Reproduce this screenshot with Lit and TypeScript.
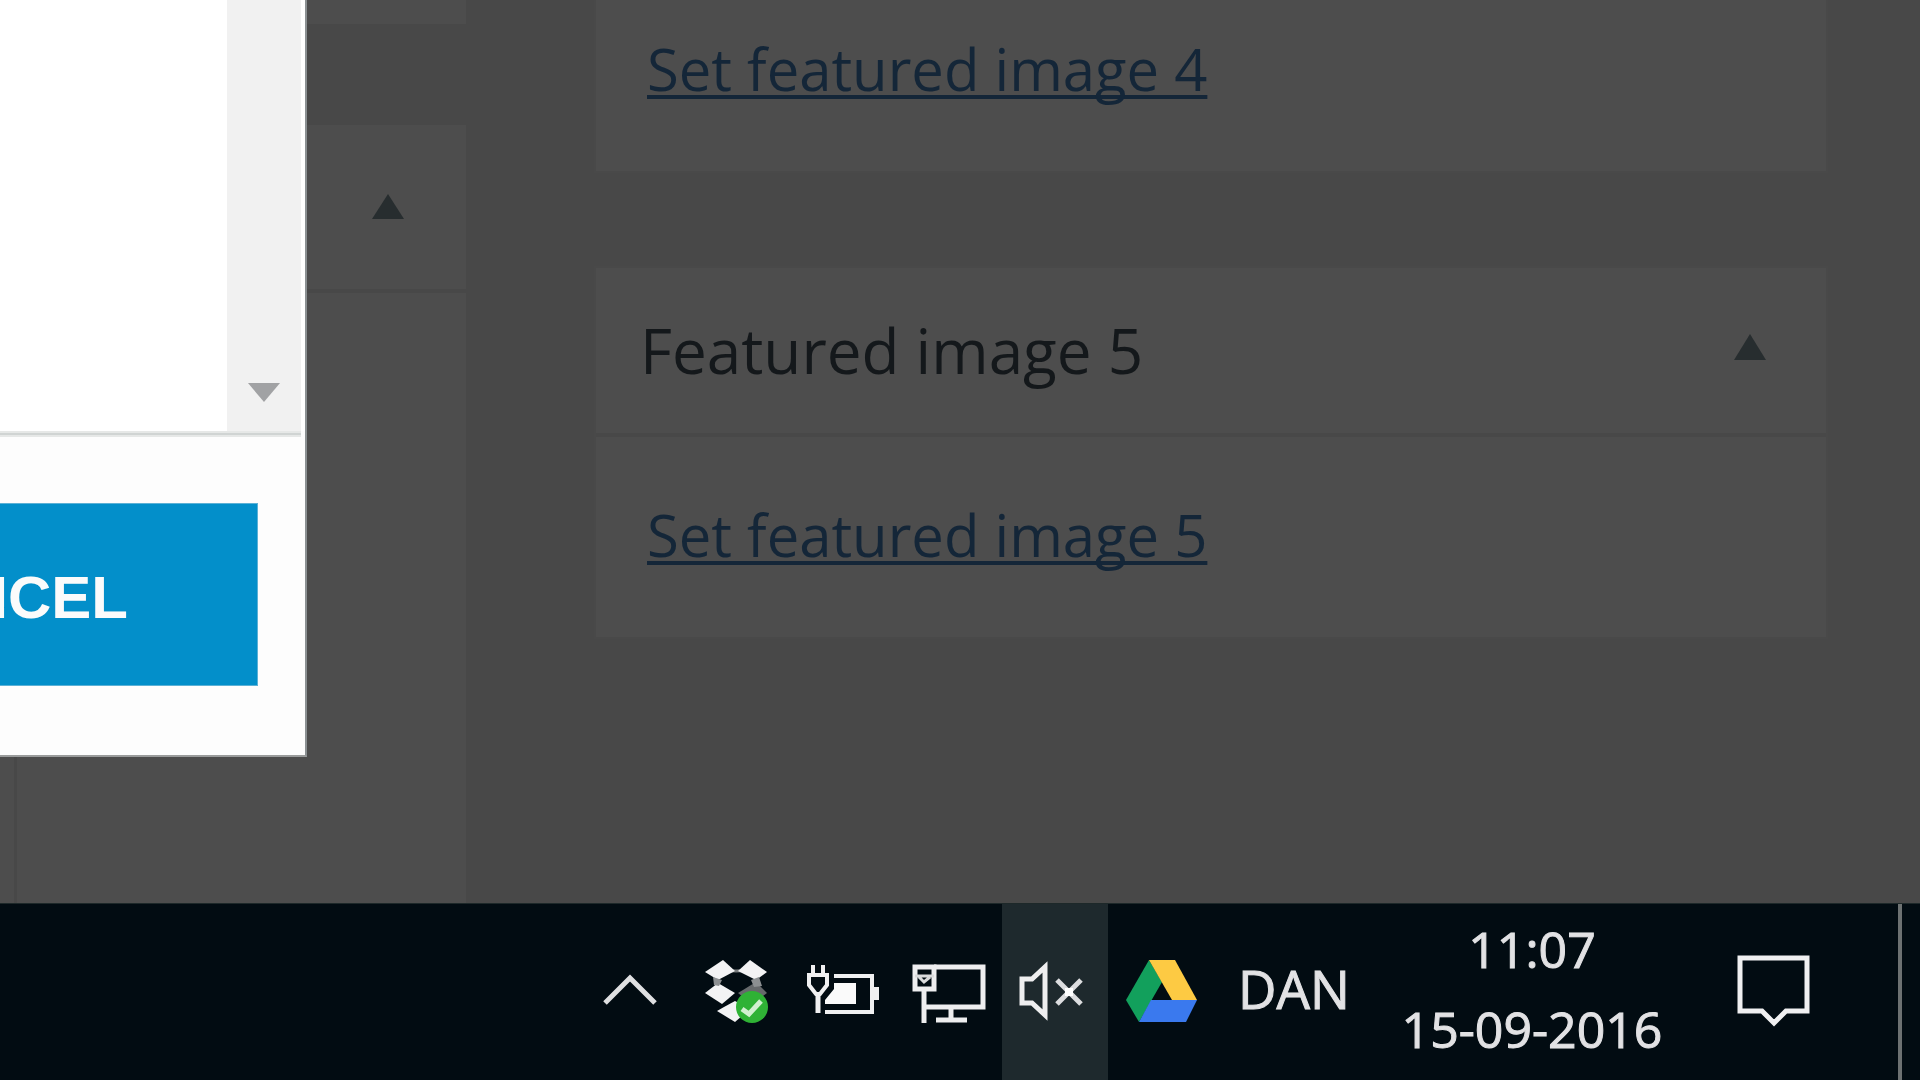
import { LitElement, html, css, svg } from "lit";
import { customElement, property } from "lit/decorators.js";

@customElement("meta-card")
export class MetaCard extends LitElement {
  @property() heading = "";
  @property() action = "";

  static styles = css`
    .card {
      background: #4d4d4d;
      border: 2px solid #494949;
      color: #14181b;
    }
    .card.cut {
      border-top: 0;
    }
    .head {
      display: flex;
      align-items: center;
      justify-content: space-between;
      padding: 46px 60px 47px 44px;
      border-bottom: 4px solid #484848;
    }
    h2 {
      margin: 0;
      font-size: 62px;
      line-height: 72px;
      font-weight: 400;
    }
    .toggle {
      display: flex;
      padding: 0;
      border: 0;
      background: none;
    }
    .body {
      padding: 66px 51px 70px;
      font-size: 58px;
      line-height: 64px;
    }
    .cut .body {
      padding-top: 37px;
    }
    a {
      color: #142638;
      text-decoration: underline;
      text-decoration-thickness: 4px;
      text-underline-offset: 4px;
      text-decoration-skip-ink: none;
    }
  `;

  render() {
    return html`
      <div class="card ${this.heading ? "" : "cut"}">
        ${this.heading
          ? html`<div class="head">
              <h2>${this.heading}</h2>
              <button class="toggle" aria-label="Toggle panel">
                <svg width="32" height="40" viewBox="0 0 32 40">
                  <path d="M16 4 32 30H0z" fill="#272d2f" />
                </svg>
              </button>
            </div>`
          : ""}
        <div class="body"><a href="#">${this.action}</a></div>
      </div>
    `;
  }
}

const trayIcons = [
  {
    label: "Show hidden icons",
    art: svg`<path d="M27 100 52 75 77 100" fill="none" stroke="#dfe0e1" stroke-width="5" />`,
  },
  {
    label: "Dropbox",
    art: svg`
      <path d="M36 67 52 68 70 67 M33 78 V80 M72 77V80" stroke="#777b7d" stroke-width="3" fill="none" />
      <g fill="#f3f3f4">
        <path d="M21 69 39 57 51 68 34 77z" />
        <path d="M66 57 83 69 72 77 54 68z" />
        <path d="M21 90 34 80 51 90 38 101z" />
        <path d="M33 108 40 104 51 98 66 106 51 119z" />
      </g>
      <path d="M54 90 72 79 83 90 68 101z" fill="#66696b" />
      <path d="M29 74 38 77 35 83 30 82z M67 77 75 74 78 83 70 84z" fill="#8c8f91" />
      <circle cx="68" cy="104" r="16" fill="#2fb235" />
      <path d="M58 106 65 111 77 98" fill="none" stroke="#d2f0d0" stroke-width="5" />`,
  },
  {
    label: "Battery charging",
    art: svg`
      <g fill="none" stroke="#f0f0f1" stroke-width="4">
        <path d="M23 62V72M33 62V72" />
        <path d="M19 72H37V82L30 91H26L19 82z" />
        <path d="M28 91V110" stroke-width="5" />
        <path d="M44 73H82V109H35" />
      </g>
      <path d="M44 80H66V101H35V97L44 86z" fill="#fafafa" />
      <path d="M83 84h6v13h-6z" fill="#f0f0f1" />`,
  },
  {
    label: "Network",
    art: svg`
      <g fill="none" stroke="#eeeeef" stroke-width="5">
        <path d="M38 64H87V104H28" />
        <path d="M19 64H38V86H19z" />
        <path d="M28 86V120M55 104V117M40 117H71" />
      </g>
      <path d="M19 73H38M23 74 28 79 34 74" fill="none" stroke="#d9dadb" stroke-width="3" />`,
  },
  {
    label: "Volume muted",
    art: svg`
      <g fill="none" stroke="#eeeeef" stroke-width="5">
        <path d="M20 76H30L43 64V112L30 100H20z" />
        <path d="M55 77 79 101M79 77 55 101" stroke="#dcdddf" />
      </g>
      <path d="M63 85h8v8h-8z" fill="#fff" />`,
  },
  {
    label: "Google Drive",
    art: svg`
      <path d="M41 57 54 79 31 119 18 97z" fill="#12a05c" />
      <path d="M41 57H67L89 97H64z" fill="#fdca43" />
      <path d="M43 97H89L78 119H31z" fill="#3a79ee" />`,
  },
];

@customElement("task-bar")
export class TaskBar extends LitElement {
  static styles = css`
    :host {
      display: flex;
      justify-content: flex-end;
      background: #020c12;
      border-top: 1px solid #1d2829;
      color: #e2e2e4;
    }
    button {
      display: flex;
      align-items: center;
      justify-content: center;
      padding: 0;
      border: 0;
      background: none;
      color: inherit;
      font: inherit;
      -webkit-text-stroke: 1px currentColor;
    }
    svg {
      display: block;
      margin-top: -1px;
    }
    .active {
      background: #1e292d;
    }
    .lang {
      width: 160px;
      padding-bottom: 8px;
      font-size: 53px;
    }
    .clock {
      width: 316px;
      flex-direction: column;
      padding-bottom: 7px;
      font-size: 50px;
      line-height: 80px;
    }
    .notes {
      margin-right: 41px;
    }
    .peek {
      width: 22px;
      border-left: 4px solid #6d7272;
    }
  `;

  render() {
    return html`
      ${trayIcons.map(
        (icon) => html`<button
          class=${icon.label === "Volume muted" ? "active" : ""}
          aria-label=${icon.label}
        >
          <svg width="106" height="177" viewBox="0 0 106 177">${icon.art}</svg>
        </button>`
      )}
      <button class="lang">DAN</button>
      <button class="clock"><span>11:07</span><span>15-09-2016</span></button>
      <button class="notes" aria-label="Notifications">
        <svg width="167" height="177" viewBox="0 0 167 177">
          <path
            d="M50 55H117V108H96L84 120 72 108H50z"
            fill="none"
            stroke="#f0f0f1"
            stroke-width="5"
          />
        </svg>
      </button>
      <button class="peek" aria-label="Show desktop"></button>
    `;
  }
}

@customElement("app-root")
export class AppRoot extends LitElement {
  static styles = css`
    :host {
      display: flex;
      flex-direction: column;
      min-height: 100vh;
      background: #484848;
      font-family: "Open Sans", "Noto Sans", sans-serif;
    }
    .workspace {
      position: relative;
      flex: 1;
      display: grid;
      grid-template-columns: 466px minmax(0, 1fr);
      column-gap: 128px;
      padding-right: 92px;
    }
    .main {
      display: flex;
      flex-direction: column;
      gap: 101px;
    }
    .panel-end {
      height: 24px;
      background: #4d4d4d;
    }
    .panel {
      flex: 1;
      display: flex;
      flex-direction: column;
      background: #4d4d4d;
    }
    .panel-head {
      display: flex;
      justify-content: flex-end;
      padding: 66px 62px 61px 0;
      border-bottom: 4px solid #484848;
    }
    .panel-body {
      flex: 1;
      margin-left: 14px;
      border-left: 3px solid #484848;
    }
    .side {
      display: flex;
      flex-direction: column;
      gap: 93px;
    }
    .toggle,
    .scroll {
      display: flex;
      padding: 0;
      border: 0;
      background: none;
    }
    .modal {
      position: absolute;
      top: 0;
      left: 0;
      width: 307px;
      overflow: hidden;
      background: #fdfdfd;
      border-right: 2px solid #8b9092;
      border-bottom: 2px solid #9a9c9c;
      box-sizing: border-box;
    }
    .content {
      display: flex;
      justify-content: flex-end;
      height: 431px;
      background: #fff;
      padding-right: 4px;
    }
    .track {
      display: flex;
      align-items: flex-end;
      justify-content: center;
      width: 74px;
      padding-bottom: 28px;
      box-sizing: border-box;
      background: #f1f1f1;
    }
    .rule {
      height: 2px;
      margin-right: 4px;
      border: 2px solid #e6e8e7;
      border-width: 2px 0;
      background: #d0d4d3;
    }
    .footer {
      display: flex;
      justify-content: flex-end;
      padding: 66px 47px 69px 0;
    }
    .cancel {
      flex: none;
      padding: 60px 129px 53px;
      border: 1px solid #5cb1d6;
      background: #038fca;
      color: #fbfbfb;
      font: bold 60px/68px "Liberation Sans", Arial, sans-serif;
    }
  `;

  render() {
    return html`
      <div class="workspace">
        <div class="main">
          <div class="panel-end"></div>
          <section class="panel">
            <div class="panel-head">
              <button class="toggle" aria-label="Toggle panel">
                <svg width="32" height="37" viewBox="0 0 32 37">
                  <path d="M16 3 32 28H0z" fill="#272d2f" />
                </svg>
              </button>
            </div>
            <div class="panel-body"></div>
          </section>
        </div>
        <div class="side">
          <meta-card action="Set featured image 4"></meta-card>
          <meta-card heading="Featured image 5" action="Set featured image 5"></meta-card>
        </div>
        <div class="modal" role="dialog" aria-label="Dialog">
          <div class="content">
            <div class="track">
              <button class="scroll" aria-label="Scroll down">
                <svg width="32" height="20" viewBox="0 0 32 20">
                  <path d="M0 0H32L16 19z" fill="#a1a2a4" />
                </svg>
              </button>
            </div>
          </div>
          <div class="rule"></div>
          <div class="footer"><button class="cancel">CANCEL</button></div>
        </div>
      </div>
      <task-bar></task-bar>
    `;
  }
}
